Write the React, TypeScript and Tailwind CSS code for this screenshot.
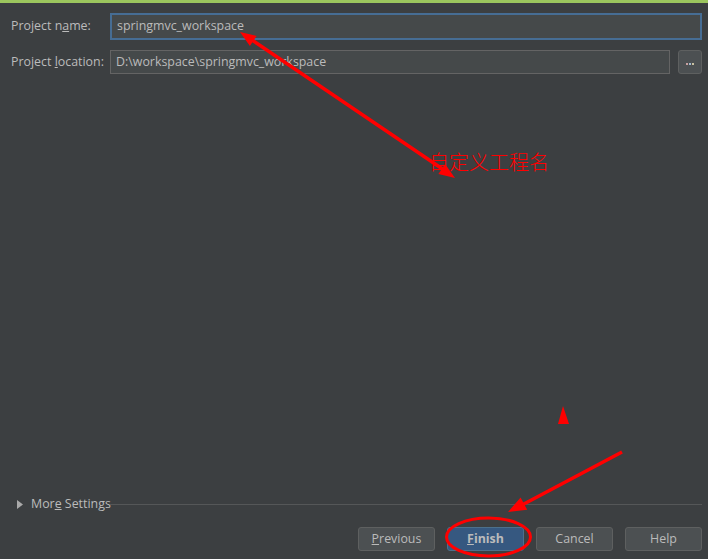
const font = { fontFamily: '"Open Sans", "Noto Sans", sans-serif' };

function Field({ label, mnemonic, value, focused }: { label: string; mnemonic: number; value: string; focused?: boolean }) {
  return (
    <div className="flex items-center">
      <div className="w-[99px] shrink-0 text-[12.4px] text-[#bbbbbb] whitespace-nowrap">
        {label.slice(0, mnemonic)}
        <span className="underline">{label[mnemonic]}</span>
        {label.slice(mnemonic + 1)}
      </div>
      <div
        className={
          focused
            ? "flex-1 h-[27px] border-2 border-[#466d94] bg-[#45494a] flex items-center pl-[5px] text-[12.4px] text-[#bbbbbb]"
            : "flex-1 h-[24px] border border-[#646464] bg-[#45494a] flex items-center pl-[5px] text-[12.4px] text-[#bbbbbb]"
        }
      >
        {value}
      </div>
    </div>
  );
}

function Btn({ label, mnemonic = -1, primary }: { label: string; mnemonic?: number; primary?: boolean }) {
  return (
    <div
      className={
        primary
          ? "w-[77px] h-[24px] rounded-[3px] border border-[#4c708c] bg-[#365880] flex items-center justify-center text-[12.4px] font-bold text-[#bbbbbb]"
          : "w-[77px] h-[24px] rounded-[3px] border border-[#5e6060] bg-[#4c5052] flex items-center justify-center text-[12.4px] text-[#bbbbbb]"
      }
    >
      {mnemonic >= 0 ? (
        <>
          {label.slice(0, mnemonic)}
          <span className="underline">{label[mnemonic]}</span>
          {label.slice(mnemonic + 1)}
        </>
      ) : (
        label
      )}
    </div>
  );
}

export default function App() {
  return (
    <div className="relative w-[708px] h-[559px] bg-[#3c3f41] flex flex-col overflow-hidden" style={font}>
      <div className="h-[3px] bg-[#9cc65e]" />

      <div className="pl-[11px] pr-[6px] pt-[10px] flex flex-col gap-[10px]">
        <Field label="Project name:" mnemonic={9} value="springmvc_workspace" focused />
        <div className="flex items-center gap-[8px]">
          <div className="flex-1">
            <Field label="Project location:" mnemonic={8} value="D:\workspace\springmvc_workspace" />
          </div>
          <div className="w-[24px] h-[24px] rounded-[3px] border border-[#5e6060] bg-[#4c5052] flex items-center justify-center">
            <div className="flex gap-[1px] mt-[4px]">
              <span className="w-[2px] h-[2px] bg-[#c8a0a0]" />
              <span className="w-[2px] h-[2px] bg-[#a0b8d0]" />
              <span className="w-[2px] h-[2px] bg-[#c8c0a0]" />
            </div>
          </div>
        </div>
      </div>

      <div className="flex-1" />

      <div className="flex items-center pl-[17px] pr-[6px] h-[16px]">
        <svg width="6" height="9" viewBox="0 0 6 9" className="mr-[8px] shrink-0">
          <polygon points="0,0 6,4.5 0,9" fill="#a9a9a9" />
        </svg>
        <span className="w-[79px] shrink-0 text-[12.4px] text-[#bbbbbb] whitespace-nowrap">
          Mor<span className="underline">e</span> Settings
        </span>
        <div className="flex-1 h-px bg-[#555758]" />
      </div>

      <div className="flex justify-end gap-[12px] pr-[6px] pt-[15px] pb-[8px]">
        <Btn label="Previous" mnemonic={0} />
        <Btn label="Finish" mnemonic={0} primary />
        <Btn label="Cancel" />
        <Btn label="Help" />
      </div>

      <svg className="absolute inset-0 pointer-events-none" width="708" height="559" viewBox="0 0 708 559">
        <line x1="252" y1="40" x2="444" y2="170" stroke="#ff0000" strokeWidth="3.5" />
        <polygon points="240,32 249.9,45.9 256.6,35.9" fill="#ff0000" />
        <polygon points="455,178 438.4,174.1 445.1,164.1" fill="#ff0000" />
        <polygon points="563,406 558,424 569,424" fill="#ff0000" />
        <line x1="622" y1="452" x2="522" y2="505" stroke="#ff0000" strokeWidth="3.5" />
        <polygon points="508,512 527.2,509.8 520.6,497.4" fill="#ff0000" />
        <ellipse cx="488.5" cy="537" rx="42" ry="19" fill="none" stroke="#ff0000" strokeWidth="3" />
      </svg>
      <div
        className="absolute left-[429px] top-[150px] text-[20px] leading-[24px] text-[#ff0000] whitespace-nowrap"
        style={{ fontFamily: '"Noto Sans CJK SC", sans-serif', fontWeight: 300 }}
      >
        自定义工程名
      </div>
    </div>
  );
}
